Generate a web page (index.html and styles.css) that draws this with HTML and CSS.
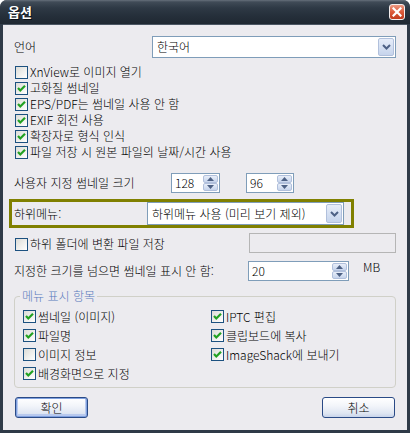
FILE: index.html
```html
<!DOCTYPE html>
<html lang="ko">
<head>
<meta charset="utf-8">
<title>옵션</title>
<link rel="stylesheet" href="styles.css">
</head>
<body>
<div class="window">
  <div class="titlebar">
    <span class="title">옵션</span>
    <span class="close"><svg width="10" height="10" viewBox="0 0 10 10"><path d="M1.5 1.5 L8.5 8.5 M8.5 1.5 L1.5 8.5" stroke="#fff" stroke-width="2.2" stroke-linecap="square"/></svg></span>
  </div>
  <div class="client">
    <div class="row lang-row">
      <span class="lbl lang-lbl">언어</span>
      <div class="combo lang-combo"><span class="combo-text">한국어</span><span class="dd"><svg width="9" height="6" viewBox="0 0 9 6"><path d="M1 1 L4.5 4.5 L8 1" fill="none" stroke="#4d6185" stroke-width="2"/></svg></span></div>
    </div>

    <div class="checks">
      <div class="chk"><span class="box"></span><span>XnView로 이미지 열기</span></div>
      <div class="chk"><span class="box on"><svg width="11" height="11" viewBox="0 0 11 11"><path d="M2 5 L4.3 7.5 L9 2.8" fill="none" stroke="#21a121" stroke-width="2.2"/></svg></span><span>고화질 썸네일</span></div>
      <div class="chk"><span class="box on"><svg width="11" height="11" viewBox="0 0 11 11"><path d="M2 5 L4.3 7.5 L9 2.8" fill="none" stroke="#21a121" stroke-width="2.2"/></svg></span><span>EPS/PDF는 썸네일 사용 안 함</span></div>
      <div class="chk"><span class="box on"><svg width="11" height="11" viewBox="0 0 11 11"><path d="M2 5 L4.3 7.5 L9 2.8" fill="none" stroke="#21a121" stroke-width="2.2"/></svg></span><span>EXIF 회전 사용</span></div>
      <div class="chk"><span class="box on"><svg width="11" height="11" viewBox="0 0 11 11"><path d="M2 5 L4.3 7.5 L9 2.8" fill="none" stroke="#21a121" stroke-width="2.2"/></svg></span><span>확장자로 형식 인식</span></div>
      <div class="chk"><span class="box on"><svg width="11" height="11" viewBox="0 0 11 11"><path d="M2 5 L4.3 7.5 L9 2.8" fill="none" stroke="#21a121" stroke-width="2.2"/></svg></span><span>파일 저장 시 원본 파일의 날짜/시간 사용</span></div>
    </div>

    <div class="row size-row">
      <span class="lbl size-lbl">사용자 지정 썸네일 크기</span>
      <div class="spin spin-w"><span class="spin-text">128</span><span class="spin-btns"><span class="sb"><svg width="7" height="4" viewBox="0 0 7 4"><path d="M0 4 L3.5 0 L7 4Z" fill="#4d6185"/></svg></span><span class="sb"><svg width="7" height="4" viewBox="0 0 7 4"><path d="M0 0 L3.5 4 L7 0Z" fill="#4d6185"/></svg></span></span></div>
      <div class="spin spin-h"><span class="spin-text">96</span><span class="spin-btns"><span class="sb"><svg width="7" height="4" viewBox="0 0 7 4"><path d="M0 4 L3.5 0 L7 4Z" fill="#4d6185"/></svg></span><span class="sb"><svg width="7" height="4" viewBox="0 0 7 4"><path d="M0 0 L3.5 4 L7 0Z" fill="#4d6185"/></svg></span></span></div>
    </div>

    <div class="highlight">
      <span class="lbl sub-lbl">하위메뉴:</span>
      <div class="combo sub-combo"><span class="combo-text">하위메뉴 사용 (미리 보기 제외)</span><span class="dd"><svg width="9" height="6" viewBox="0 0 9 6"><path d="M1 1 L4.5 4.5 L8 1" fill="none" stroke="#4d6185" stroke-width="2"/></svg></span></div>
    </div>

    <div class="row folder-row">
      <div class="chk"><span class="box"></span><span>하위 폴더에 변환 파일 저장</span></div>
      <div class="field-disabled"></div>
    </div>

    <div class="row limit-row">
      <span class="lbl limit-lbl">지정한 크기를 넘으면 썸네일 표시 안 함:</span>
      <div class="spin spin-limit"><span class="spin-text">20</span><span class="spin-btns"><span class="sb"><svg width="7" height="4" viewBox="0 0 7 4"><path d="M0 4 L3.5 0 L7 4Z" fill="#4d6185"/></svg></span><span class="sb"><svg width="7" height="4" viewBox="0 0 7 4"><path d="M0 0 L3.5 4 L7 0Z" fill="#4d6185"/></svg></span></span></div>
      <span class="unit">MB</span>
    </div>

    <fieldset class="group">
      <legend>메뉴 표시 항목</legend>
      <div class="group-grid">
        <div class="chk gchk"><span class="box on"><svg width="11" height="11" viewBox="0 0 11 11"><path d="M2 5 L4.3 7.5 L9 2.8" fill="none" stroke="#21a121" stroke-width="2.2"/></svg></span><span>썸네일 (이미지)</span></div>
        <div class="chk gchk"><span class="box on"><svg width="11" height="11" viewBox="0 0 11 11"><path d="M2 5 L4.3 7.5 L9 2.8" fill="none" stroke="#21a121" stroke-width="2.2"/></svg></span><span>IPTC 편집</span></div>
        <div class="chk gchk"><span class="box on"><svg width="11" height="11" viewBox="0 0 11 11"><path d="M2 5 L4.3 7.5 L9 2.8" fill="none" stroke="#21a121" stroke-width="2.2"/></svg></span><span>파일명</span></div>
        <div class="chk gchk"><span class="box on"><svg width="11" height="11" viewBox="0 0 11 11"><path d="M2 5 L4.3 7.5 L9 2.8" fill="none" stroke="#21a121" stroke-width="2.2"/></svg></span><span>클립보드에 복사</span></div>
        <div class="chk gchk"><span class="box"></span><span>이미지 정보</span></div>
        <div class="chk gchk"><span class="box on"><svg width="11" height="11" viewBox="0 0 11 11"><path d="M2 5 L4.3 7.5 L9 2.8" fill="none" stroke="#21a121" stroke-width="2.2"/></svg></span><span>ImageShack에 보내기</span></div>
        <div class="chk gchk"><span class="box on"><svg width="11" height="11" viewBox="0 0 11 11"><path d="M2 5 L4.3 7.5 L9 2.8" fill="none" stroke="#21a121" stroke-width="2.2"/></svg></span><span>배경화면으로 지정</span></div>
      </div>
    </fieldset>

    <div class="buttons">
      <button class="btn default">확인</button>
      <button class="btn">취소</button>
    </div>
  </div>
</div>
</body>
</html>
```

FILE: styles.css
```css
* { box-sizing: border-box; }

html, body {
  margin: 0;
  padding: 0;
  background: #ffffff;
}

body {
  width: 410px;
  height: 433px;
  overflow: hidden;
  font-family: "Noto Sans CJK KR", "Noto Sans", sans-serif;
  font-size: 12px;
  font-weight: 300;
  line-height: 16px;
  color: #000;
}

.window {
  width: 410px;
  height: 433px;
  display: flex;
  flex-direction: column;
  background: #2f3a47;
  border-radius: 7px 7px 0 0;
}

.titlebar {
  height: 24px;
  flex: none;
  display: flex;
  align-items: center;
  justify-content: space-between;
  padding: 0 5px 0 8px;
  border-radius: 7px 7px 0 0;
  background: linear-gradient(#66707b 0px, #404b57 2px, #2e3945 8px, #252f3a 16px, #1f2832 24px);
}

.title {
  color: #fff;
  font-weight: bold;
  font-size: 13px;
  line-height: 16px;
  text-shadow: 1px 1px 0 #0b1119;
}

.close {
  width: 16px;
  height: 16px;
  display: flex;
  align-items: center;
  justify-content: center;
  border: 1px solid #f4eeee;
  border-radius: 3px;
  background: linear-gradient(#ec9a84, #dc5a3a 50%, #c13b1d);
}

.client {
  flex: 1;
  margin: 0 3px 3px;
  padding: 0 11px;
  background: #ecebef;
  display: flex;
  flex-direction: column;
  border-top: 1px solid #4b5663;
}

.row {
  display: flex;
  align-items: center;
}

.lbl { flex: none; white-space: nowrap; }

/* language row */
.lang-row { margin-top: 11px; height: 22px; }
.lang-lbl { width: 138px; }
.lang-combo { width: 244px; height: 22px; }

.combo {
  display: flex;
  align-items: center;
  background: #fff;
  border: 1px solid #7f9db9;
  padding: 1px;
}
.combo-text {
  flex: 1;
  padding-left: 3px;
  white-space: nowrap;
}
.dd {
  width: 16px;
  align-self: stretch;
  display: flex;
  align-items: center;
  justify-content: center;
  border: 1px solid #b1c0dc;
  border-radius: 2px;
  background: linear-gradient(#e6edf9, #c6d4ec);
}

/* checkboxes */
.checks {
  margin-top: 6px;
  display: flex;
  flex-direction: column;
}
.chk {
  height: 16px;
  display: flex;
  align-items: center;
  white-space: nowrap;
}
.box {
  flex: none;
  width: 13px;
  height: 13px;
  margin: 0 2px 0 1px;
  border: 1px solid #1c5180;
  background: linear-gradient(135deg, #dcdcd7, #ffffff);
  display: flex;
  align-items: center;
  justify-content: center;
}

/* thumbnail size row */
.size-row { margin-top: 13px; height: 20px; }
.size-lbl { width: 157px; }
.spin {
  display: flex;
  align-items: center;
  height: 20px;
  background: #fff;
  border: 1px solid #7f9db9;
  padding: 1px;
}
.spin-w { width: 49px; }
.spin-h { width: 48px; margin-left: 26px; }
.spin-text { flex: 1; padding-left: 2px; white-space: nowrap; }
.spin-btns {
  width: 15px;
  align-self: stretch;
  display: flex;
  flex-direction: column;
}
.sb {
  flex: 1;
  display: flex;
  align-items: center;
  justify-content: center;
  border: 1px solid #b1c0dc;
  border-radius: 2px;
  background: linear-gradient(#e8eef9, #c6d4ec);
}

/* highlighted submenu row */
.highlight {
  margin-top: 6px;
  margin-left: -5px;
  width: 345px;
  height: 29px;
  border: 3px solid #808000;
  padding-left: 2px;
  display: flex;
  align-items: center;
}
.sub-lbl { width: 133px; }
.sub-combo { width: 197px; height: 23px; }

/* subfolder row */
.folder-row { margin-top: 5px; height: 20px; justify-content: space-between; }
.folder-row .chk { margin-top: 2px; }
.field-disabled {
  width: 147px;
  height: 20px;
  border: 1px solid #b5b5b5;
  background: #ecebef;
}

/* limit row */
.limit-row { margin-top: 8px; height: 20px; align-items: flex-start; }
.limit-lbl { width: 234px; line-height: 20px; }
.spin-limit { width: 101px; }
.unit { margin-left: 14px; line-height: 12px; }

/* group box */
.group {
  margin: 8px 0 0;
  padding: 4px 7px 4px 7px;
  border: 1px solid #d0d0c8;
  border-radius: 4px;
  min-width: 0;
}
.group legend {
  padding: 0 2px;
  margin-left: -2px;
  line-height: 14px;
  color: #5a7bbd;
}
.group-grid {
  display: grid;
  grid-template-columns: 188px 1fr;
}
.gchk { height: 19px; }

/* buttons */
.buttons {
  margin-top: 9px;
  display: flex;
  justify-content: space-between;
  padding: 0 1px;
}
.btn {
  width: 73px;
  height: 21px;
  padding: 0;
  font-family: "Noto Sans CJK KR", "Noto Sans", sans-serif;
  font-size: 12px;
  font-weight: 300;
  line-height: 16px;
  color: #000;
  border: 1px solid #2a4a86;
  border-radius: 3px;
  background: linear-gradient(#ffffff, #f3f5fa 40%, #dfe6f2 80%, #c8d4ea);
}
.btn.default {
  box-shadow: inset 0 0 0 1px #7fa0df, inset 0 -1px 0 2px #b8c9ee;
}
```
